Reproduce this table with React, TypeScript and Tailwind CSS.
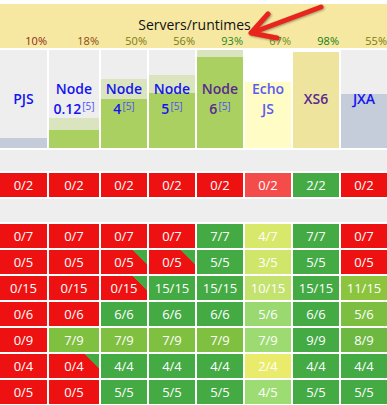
import React from "react";

type Head = {
  lines: string[];
  sup?: boolean;
  bg: string;
  band?: number;
  bar: number;
  barColor: string;
  text: string;
  pct: string;
  pctColor: string;
};

const heads: Head[] = [
  { lines: ["PJS"], bg: "#eeeeee", bar: 10, barColor: "#c5ccd9", text: "#1414ee", pct: "10%", pctColor: "#8b2a10" },
  { lines: ["Node", "0.12"], sup: true, bg: "#eeeeee", band: 12, bar: 18, barColor: "#abd062", text: "#1414ee", pct: "18%", pctColor: "#8b4a10" },
  { lines: ["Node", "4"], sup: true, bg: "#eeeeee", band: 20, bar: 49, barColor: "#abd062", text: "#1414ee", pct: "50%", pctColor: "#7a7a10" },
  { lines: ["Node", "5"], sup: true, bg: "#eeeeee", band: 18, bar: 55, barColor: "#abd062", text: "#1414ee", pct: "56%", pctColor: "#737a10" },
  { lines: ["Node", "6"], sup: true, bg: "#eeeeee", band: 7, bar: 91, barColor: "#abd062", text: "#5a2a8e", pct: "93%", pctColor: "#1e8a1e" },
  { lines: ["Echo", "JS"], bg: "#ffffff", bar: 66, barColor: "#fffcc6", text: "#5a5af5", pct: "67%", pctColor: "#6b8e23" },
  { lines: ["XS6"], bg: "#ffffff", bar: 96, barColor: "#efe49e", text: "#5a2a8e", pct: "98%", pctColor: "#118011" },
  { lines: ["JXA"], bg: "#eeeeee", bar: 54, barColor: "#c5ccda", text: "#1414ee", pct: "55%", pctColor: "#7a7a10" },
];

const R = "#ee1111";
const G = "#44aa44";

type C = [string, string, boolean?];

const topRow: C[] = [
  ["0/2", R], ["0/2", R], ["0/2", R], ["0/2", R], ["0/2", R], ["0/2", "#f44b4b"], ["2/2", G], ["0/2", R],
];

const rows: C[][] = [
  [["0/7", R], ["0/7", R], ["0/7", R], ["0/7", R], ["7/7", G], ["4/7", "#d8e86a"], ["7/7", G], ["0/7", R]],
  [["0/5", R], ["0/5", R], ["0/5", R, true], ["0/5", R, true], ["5/5", G], ["3/5", "#cfe66a"], ["5/5", G], ["0/5", R]],
  [["0/15", R], ["0/15", R], ["0/15", R, true], ["15/15", G], ["15/15", G], ["10/15", "#c4e36e"], ["15/15", G], ["11/15", "#8cc43e"]],
  [["0/6", R], ["0/6", R], ["6/6", G], ["6/6", G], ["6/6", G], ["5/6", "#9ad970"], ["6/6", G], ["5/6", "#7cbf40"]],
  [["0/9", R], ["7/9", "#80c040"], ["7/9", "#80c040"], ["7/9", "#80c040"], ["7/9", "#80c040"], ["7/9", "#9ddb72"], ["9/9", G], ["8/9", "#6cb840"]],
  [["0/4", R], ["0/4", R, true], ["4/4", G], ["4/4", G], ["4/4", G], ["2/4", "#ebeb6b"], ["4/4", G], ["4/4", G]],
  [["0/5", R], ["0/5", R], ["5/5", G], ["5/5", G], ["5/5", G], ["4/5", "#9ddc72"], ["5/5", G], ["5/5", G]],
];

const grid = "grid grid-cols-[47px_50px_repeat(6,46px)] gap-x-[2px]";

function Cell({ c }: { c: C }) {
  const [t, bg, tri] = c;
  return (
    <div
      className="h-[24px] flex items-center justify-center text-white text-[13px] leading-none"
      style={{
        background: tri
          ? `linear-gradient(225deg, ${G} 10px, ${bg} 10px)`
          : bg,
      }}
    >
      {t}
    </div>
  );
}

export default function App() {
  return (
    <div
      className="relative w-[387px] h-[405px] bg-white overflow-hidden"
      style={{ fontFamily: '"Open Sans", "Noto Sans", sans-serif' }}
    >
      <div className="h-[4px]" />
      {/* yellow band */}
      <div className="h-[44px] bg-[#f6e7a1] pt-[12px]">
        <div className="text-center text-[14px] leading-[18px] text-[#111] pl-[2px]">
          Servers/runtimes
        </div>
        <div className={grid}>
          {heads.map((h, i) => (
            <div
              key={i}
              className="text-right text-[11px] leading-[13px]"
              style={{ color: h.pctColor }}
            >
              {h.pct}
            </div>
          ))}
        </div>
      </div>
      <div className="h-[2px]" />
      {/* header cells */}
      <div className={grid}>
        {heads.map((h, i) => (
          <div
            key={i}
            className="relative h-[98px] flex flex-col justify-end"
            style={{ background: h.bg }}
          >
            {h.band ? (
              <div style={{ height: h.band, background: "#dae5c0" }} />
            ) : null}
            <div style={{ height: h.bar, background: h.barColor }} />
            <div
              className="absolute inset-0 flex flex-col items-center justify-center text-[14px] font-semibold"
              style={{ color: h.text }}
            >
              {h.lines.map((l, j) => (
                <div key={j} className="h-[20px] leading-[20px] flex items-start whitespace-nowrap">
                  <span>{l}</span>
                  {h.sup && j === 1 ? (
                    <span className="text-[10px] leading-[12px] font-normal text-[#4d4df5] ml-[1px] mt-[1px]">
                      [5]
                    </span>
                  ) : null}
                </div>
              ))}
            </div>
          </div>
        ))}
      </div>
      <div className="h-[2px]" />
      <div className="h-[21px] bg-[#eeeeee]" />
      <div className="h-[2px]" />
      <div className={grid}>
        {topRow.map((c, i) => (
          <Cell key={i} c={c} />
        ))}
      </div>
      <div className="h-[2px]" />
      <div className="h-[23px] bg-[#eeeeee]" />
      <div className="h-[2px]" />
      <div className="flex flex-col gap-y-[2px]">
        {rows.map((r, ri) => (
          <div key={ri} className={grid}>
            {r.map((c, i) => (
              <Cell key={i} c={c} />
            ))}
          </div>
        ))}
      </div>
      {/* red arrow annotation */}
      <svg
        className="absolute left-0 top-0 pointer-events-none"
        width="387"
        height="60"
        viewBox="0 0 387 60"
      >
        <g
          stroke="#e8241c"
          strokeWidth="5"
          strokeLinecap="round"
          strokeLinejoin="round"
          fill="none"
          style={{ filter: "drop-shadow(1px 1px 1px rgba(0,0,0,0.35))" }}
        >
          <path d="M321 7 L254 32" />
          <path d="M268 14 L251 33 L277 38" />
        </g>
      </svg>
    </div>
  );
}
